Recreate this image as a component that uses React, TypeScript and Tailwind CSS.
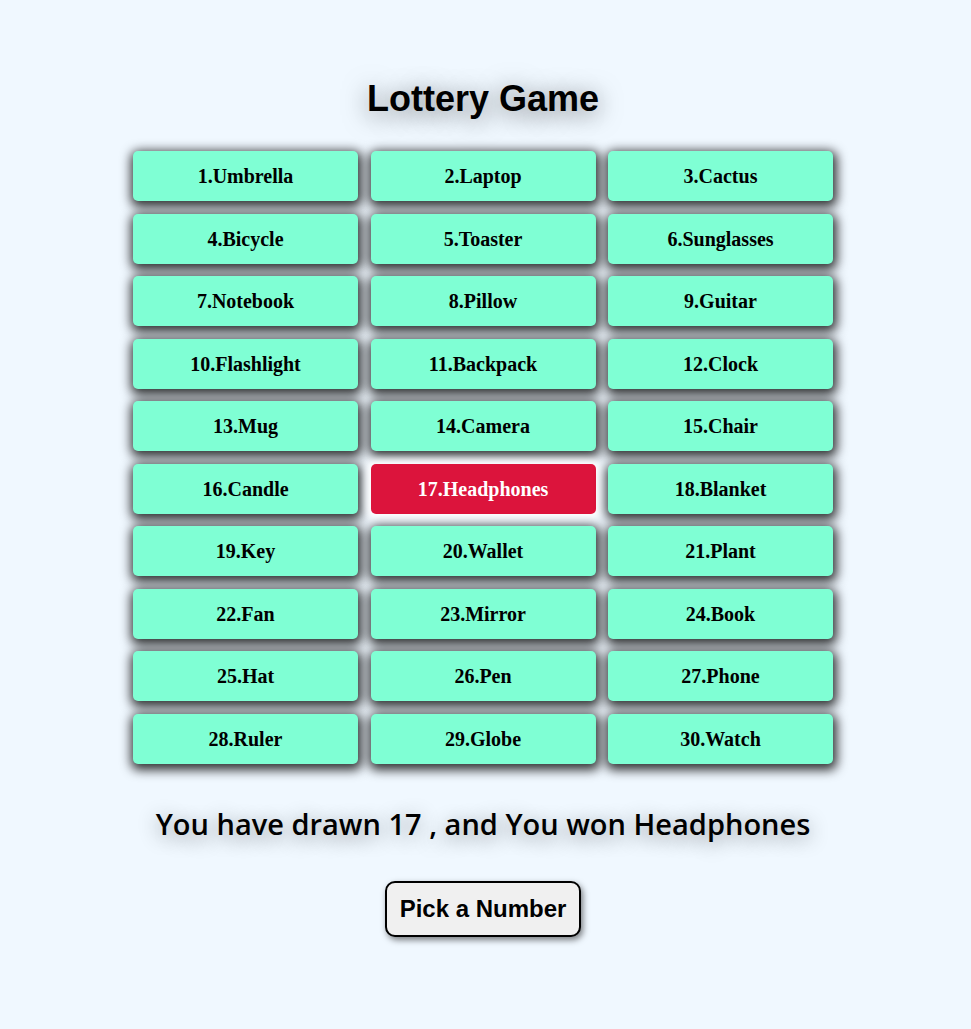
const items = [
  "Umbrella", "Laptop", "Cactus", "Bicycle", "Toaster", "Sunglasses",
  "Notebook", "Pillow", "Guitar", "Flashlight", "Backpack", "Clock",
  "Mug", "Camera", "Chair", "Candle", "Headphones", "Blanket",
  "Key", "Wallet", "Plant", "Fan", "Mirror", "Book",
  "Hat", "Pen", "Phone", "Ruler", "Globe", "Watch",
];

const drawn = 17;

export default function App() {
  return (
    <div className="min-h-[1029px] bg-[#f0f8ff] pr-[5px] pt-[78px] flex flex-col items-center">
      <h1 className="text-[36px] leading-[42px] font-bold text-black [font-family:'Liberation_Sans',Arial,sans-serif] [text-shadow:0_4px_24px_rgba(0,0,0,0.55)]">
        Lottery Game
      </h1>
      <div className="mt-[31px] grid grid-cols-[225px_225px_225px] gap-x-[12.5px] gap-y-[12.5px]">
        {items.map((item, index) => (
          <div
            key={index}
            className={`h-[50px] rounded-[5px] flex items-center justify-center text-[20px] font-bold [font-family:'Liberation_Serif','Times_New_Roman',serif] ${
              index + 1 === drawn
                ? 'bg-[#dc143c] text-white shadow-[0_0_10px_4px_#ffffff]'
                : 'bg-[#7fffd4] text-black shadow-[1px_3px_11px_3px_rgba(0,0,0,0.8)]'
            }`}
          >
            {index + 1}.{item}
          </div>
        ))}
      </div>
      <p className="mt-[42px] text-[29px] leading-[35px] font-semibold text-black [font-family:'Open_Sans',sans-serif] [text-shadow:0_4px_20px_rgba(0,0,0,0.45)]">
        You have drawn {drawn} , and You won {items[drawn - 1]}
      </p>
      <button className="mt-[40px] h-[56px] px-[13px] rounded-[10px] border-2 border-black bg-[#f0f0f0] text-[24px] font-bold text-black [font-family:'Liberation_Sans',Arial,sans-serif] shadow-[2px_3px_6px_rgba(0,0,0,0.5)]">
        Pick a Number
      </button>
    </div>
  );
}
